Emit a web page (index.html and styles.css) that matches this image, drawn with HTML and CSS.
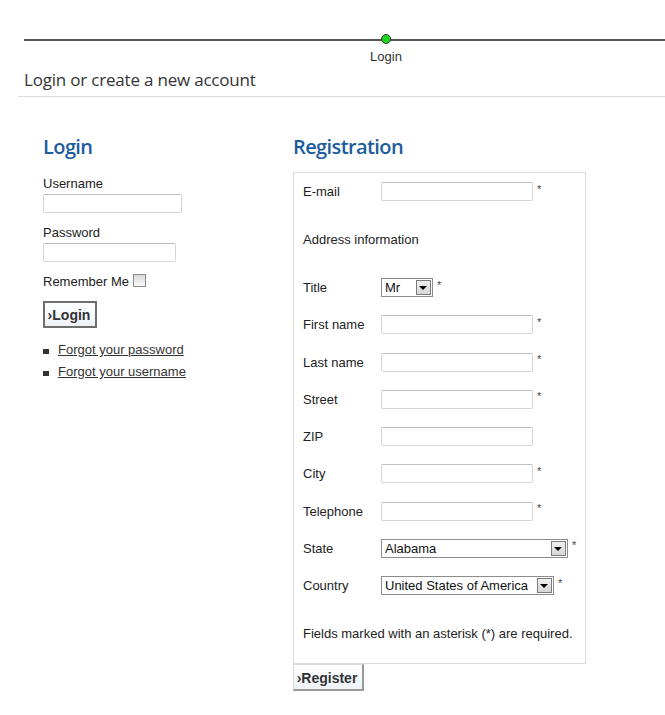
FILE: index.html
```html
<!DOCTYPE html>
<html lang="en">
<head>
    <meta charset="UTF-8">
    <meta name="viewport" content="width=device-width, initial-scale=1.0">
    <title>Login or create a new account</title>
    <link rel="stylesheet" href="styles.css">
</head>
<body>
    <div class="steps">
        <div class="step">
            <span class="dot"></span>
            <span class="step-label">Login</span>
        </div>
    </div>

    <h1 class="page-title">Login or create a new account</h1>

    <div class="content">
        <div class="login-col">
            <h2>Login</h2>
            <form class="login-form">
                <label class="field-label" for="username">Username</label>
                <input type="text" id="username" class="text-input user-input">

                <label class="field-label" for="password">Password</label>
                <input type="password" id="password" class="text-input pass-input">

                <label class="remember">Remember Me <input type="checkbox" class="check"></label>

                <button type="submit" class="btn btn-login">&rsaquo;Login</button>
            </form>

            <ul class="links">
                <li><a href="#">Forgot your password</a></li>
                <li><a href="#">Forgot your username</a></li>
            </ul>
        </div>

        <div class="register-col">
            <h2>Registration</h2>
            <form>
                <div class="reg-box">
                    <div class="row spaced">
                        <label class="reg-label">E-mail</label>
                        <input type="text" class="text-input reg-input"><span class="req">*</span>
                    </div>
                    <div class="row spaced">
                        <span class="section-title">Address information</span>
                    </div>
                    <div class="row">
                        <label class="reg-label">Title</label>
                        <span class="select-wrap title-select">
                            <select><option>Mr</option><option>Mrs</option></select>
                        </span><span class="req">*</span>
                    </div>
                    <div class="row">
                        <label class="reg-label">First name</label>
                        <input type="text" class="text-input reg-input"><span class="req">*</span>
                    </div>
                    <div class="row">
                        <label class="reg-label">Last name</label>
                        <input type="text" class="text-input reg-input"><span class="req">*</span>
                    </div>
                    <div class="row">
                        <label class="reg-label">Street</label>
                        <input type="text" class="text-input reg-input"><span class="req">*</span>
                    </div>
                    <div class="row">
                        <label class="reg-label">ZIP</label>
                        <input type="text" class="text-input reg-input">
                    </div>
                    <div class="row">
                        <label class="reg-label">City</label>
                        <input type="text" class="text-input reg-input"><span class="req">*</span>
                    </div>
                    <div class="row">
                        <label class="reg-label">Telephone</label>
                        <input type="text" class="text-input reg-input"><span class="req">*</span>
                    </div>
                    <div class="row">
                        <label class="reg-label">State</label>
                        <span class="select-wrap state-select">
                            <select><option>Alabama</option><option>Alaska</option></select>
                        </span><span class="req">*</span>
                    </div>
                    <div class="row spaced">
                        <label class="reg-label">Country</label>
                        <span class="select-wrap country-select">
                            <select><option>United States of America</option></select>
                        </span><span class="req">*</span>
                    </div>
                    <p class="note">Fields marked with an asterisk (*) are required.</p>
                </div>
                <button type="submit" class="btn btn-register">&rsaquo;Register</button>
            </form>
        </div>
    </div>
</body>
</html>
```

FILE: styles.css
```css
body {
    margin: 0;
    font-family: "Liberation Sans", Arial, sans-serif;
    font-size: 13px;
    color: #222;
    background-color: #fff;
}

/* progress line with the current step */
.steps {
    position: relative;
    margin: 39px 0 0 24px;
    height: 2px;
    background-color: #555;
}

.step {
    position: absolute;
    left: 362px;
    top: -5px;
    transform: translateX(-50%);
    display: flex;
    flex-direction: column;
    align-items: center;
}

.dot {
    width: 8px;
    height: 8px;
    border: 1.5px solid #333;
    border-radius: 50%;
    background-color: #1fd51f;
}

.step-label {
    margin-top: 5px;
    line-height: 15px;
    font-size: 13px;
    color: #333;
}

.page-title {
    margin: 27px 0 0 18px;
    padding: 0 0 5px 6px;
    border-bottom: 1px solid #ddd;
    font-family: "Open Sans", sans-serif;
    font-weight: 500;
    font-size: 17px;
    line-height: 23px;
    letter-spacing: -0.2px;
    color: #333;
}

.content {
    display: flex;
    padding-left: 43px;
    margin-top: 37px;
}

h2 {
    margin: 0;
    font-family: "Open Sans", sans-serif;
    font-weight: 600;
    font-size: 20px;
    line-height: 26px;
    letter-spacing: -0.6px;
    color: #1c5c9c;
}

.login-col {
    width: 250px;
}

.login-form {
    display: flex;
    flex-direction: column;
    align-items: flex-start;
    margin-top: 16px;
}

.field-label {
    line-height: 15px;
}

.text-input {
    box-sizing: border-box;
    height: 19px;
    padding: 1px 3px;
    border: 1px solid #d6d6d6;
    border-top-color: #bdbdbd;
    border-radius: 2px;
    font-family: inherit;
    font-size: 12px;
}

.user-input {
    width: 139px;
    margin: 3px 0 12px;
}

.pass-input {
    width: 133px;
    margin: 3px 0 12px;
}

.remember {
    display: flex;
    align-items: center;
    line-height: 15px;
}

.check {
    appearance: none;
    width: 13px;
    height: 13px;
    margin: -3px 0 0 4px;
    border: 1px solid #8a8a8a;
    background: linear-gradient(#d8d8d8, #fbfbfb);
}

.btn {
    box-sizing: border-box;
    height: 27px;
    padding: 0 3px 0 1px;
    font-family: "Liberation Sans", Arial, sans-serif;
    font-weight: bold;
    font-size: 14px;
    color: #333;
    background: linear-gradient(#ffffff, #eef2f7);
    cursor: pointer;
}

.btn-login {
    width: 54px;
    margin-top: 12px;
    border: 2px solid #6e6e6e;
}

.btn-register {
    width: 71px;
    border: 1px solid #d8d8d8;
    border-right: 2px solid #9a9a9a;
    border-bottom: 2px solid #9a9a9a;
    padding-top: 1px;
}

.links {
    list-style: none;
    margin: 11px 0 0;
    padding: 0;
}

.links li {
    display: flex;
    align-items: center;
    line-height: 22px;
}

.links li::before {
    content: "";
    width: 6px;
    height: 5px;
    margin: 2px 9px 0 0;
    background-color: #333;
}

.links a {
    color: #333;
}

/* registration */
.register-col {
    width: 293px;
}

.reg-box {
    margin-top: 12px;
    padding: 9px 0 22px 9px;
    border: 1px solid #dcdcdc;
}

.row {
    display: flex;
    align-items: center;
    height: 19px;
    margin-bottom: 18.25px;
}

.row.spaced {
    margin-bottom: 29px;
}

.reg-label {
    width: 78px;
}

.reg-input {
    width: 152px;
}

.req {
    margin: -6px 0 0 4px;
    font-size: 11px;
    color: #444;
}

.select-wrap {
    position: relative;
    display: inline-block;
    box-sizing: border-box;
    height: 19px;
    border: 1px solid #8c8c8c;
    overflow: hidden;
}

.select-wrap select {
    appearance: none;
    display: block;
    width: 100%;
    height: 17px;
    margin: 0;
    padding: 0 0 0 3px;
    border: none;
    background: #fff;
    font-family: "Liberation Sans", Arial, sans-serif;
    font-size: 13px;
    color: #111;
}

/* drop-down button drawn over the select's right end */
.select-wrap::after {
    content: "";
    position: absolute;
    right: 1px;
    top: 1px;
    box-sizing: border-box;
    width: 15px;
    height: 15px;
    border: 1px solid #7a7a7a;
    background: linear-gradient(#f0f0f0, #d6d6d6);
    pointer-events: none;
}

.select-wrap::before {
    content: "";
    position: absolute;
    right: 5px;
    top: 7px;
    z-index: 1;
    border-left: 4px solid transparent;
    border-right: 4px solid transparent;
    border-top: 4px solid #000;
    pointer-events: none;
}

.title-select {
    width: 52px;
}

.state-select {
    width: 187px;
}

.country-select {
    width: 173px;
}

.note {
    margin: 0;
    padding-top: 2px;
    line-height: 15px;
}
```
